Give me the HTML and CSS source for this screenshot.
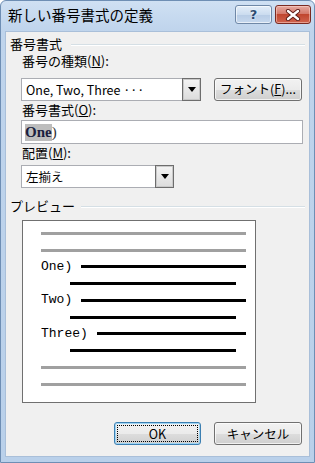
FILE: index.html
```html
<!DOCTYPE html>
<html lang="ja">
<head>
<meta charset="utf-8">
<link rel="stylesheet" href="styles.css">
</head>
<body>
<div class="window">
  <div class="titlebar">
    <span class="title">新しい番号書式の定義</span>
    <div class="caption-buttons">
      <div class="cbtn help">?</div>
      <div class="cbtn close">
        <svg width="16" height="12" viewBox="0 0 16 12"><path d="M3 2 L13 10 M13 2 L3 10" stroke="#5a1a14" stroke-width="4.2" stroke-linecap="round"/><path d="M3 2 L13 10 M13 2 L3 10" stroke="#ffffff" stroke-width="2.4" stroke-linecap="round"/></svg>
      </div>
    </div>
  </div>
  <div class="client">
    <div class="group-label"><span>番号書式</span><div class="sep"></div></div>
    <div class="field-label">番号の種類(<u>N</u>):</div>
    <div class="row">
      <div class="combo wide"><div class="combo-text">One, Two, Three ···</div><div class="drop"><svg width="8" height="5" viewBox="0 0 8 5"><path d="M0 0 H8 L4 5 Z" fill="#000"/></svg></div></div>
      <div class="btn font-btn">フォント(<u>F</u>)...</div>
    </div>
    <div class="field-label">番号書式(<u>O</u>):</div>
    <div class="textbox"><span class="sel">One</span><span class="paren">)</span></div>
    <div class="field-label">配置(<u>M</u>):</div>
    <div class="combo narrow"><div class="combo-text">左揃え</div><div class="drop"><svg width="8" height="5" viewBox="0 0 8 5"><path d="M0 0 H8 L4 5 Z" fill="#000"/></svg></div></div>
    <div class="group-label group2"><span>プレビュー</span><div class="sep"></div></div>
    <div class="preview">
      <div class="pv-row"><div class="line gray"></div></div>
      <div class="pv-row"><div class="line gray"></div></div>
      <div class="pv-row"><span class="pv-text">One)</span><div class="line black"></div></div>
      <div class="pv-row cont"><div class="line black"></div></div>
      <div class="pv-row"><span class="pv-text">Two)</span><div class="line black"></div></div>
      <div class="pv-row cont"><div class="line black"></div></div>
      <div class="pv-row"><span class="pv-text">Three)</span><div class="line black"></div></div>
      <div class="pv-row cont"><div class="line black"></div></div>
      <div class="pv-row"><div class="line gray"></div></div>
      <div class="pv-row"><div class="line gray"></div></div>
    </div>
    <div class="buttons">
      <div class="btn ok"><span class="focus">OK</span></div>
      <div class="btn cancel">キャンセル</div>
    </div>
  </div>
</div>
</body>
</html>
```

FILE: styles.css
```css
* { box-sizing: border-box; }
html, body { margin: 0; padding: 0; }
body {
  width: 315px;
  height: 463px;
  overflow: hidden;
  background: #ffffff;
  font-family: "Noto Sans CJK JP", "Noto Sans", sans-serif;
  font-size: 13px;
  color: #000;
}
.window {
  width: 315px;
  height: 463px;
  display: flex;
  flex-direction: column;
  border: 1px solid #6e8eb4;
  border-radius: 6px 6px 0 0;
  background: linear-gradient(to bottom, #cfe0f3 0px, #bfd4ec 30px, #b9d0ea 100%);
  padding: 0 4px 5px 4px;
}
.titlebar {
  height: 30px;
  display: flex;
  align-items: flex-start;
  justify-content: space-between;
  flex: none;
}
.title {
  font-size: 14.5px;
  line-height: 18px;
  margin-top: 5px;
  margin-left: 3px;
  color: #000;
}
.caption-buttons {
  display: flex;
  gap: 3px;
  margin-top: 4px;
  margin-right: -1px;
}
.cbtn {
  height: 19px;
  border-radius: 3px;
  display: flex;
  align-items: center;
  justify-content: center;
}
.help {
  width: 37px;
  border: 1px solid #6f88a7;
  background: linear-gradient(to bottom, #e4eef9 0%, #cbdcef 50%, #b7cce5 51%, #c6d8ee 100%);
  box-shadow: inset 0 0 0 1px rgba(255,255,255,0.6);
  font-family: "DejaVu Sans", sans-serif;
  font-weight: bold;
  font-size: 13px;
  color: #2d4c72;
  text-shadow: 0 0 2px #fff;
}
.close {
  width: 36px;
  border: 1px solid #7a2a22;
  background: linear-gradient(to bottom, #e6a9a0 0%, #d47a6c 45%, #c0462f 50%, #d0634e 100%);
  box-shadow: inset 0 0 0 1px rgba(255,220,210,0.5);
}
.client {
  flex: 1;
  background: #f0f0f0;
  border: 1px solid #a9bfd9;
  display: flex;
  flex-direction: column;
  align-items: flex-start;
}
.group-label {
  display: flex;
  align-items: center;
  width: 100%;
  height: 16px;
  margin-top: 4px;
  padding-left: 4px;
  line-height: 16px;
  font-size: 13px;
}
.group-label .sep {
  flex: 1;
  height: 2px;
  border-top: 1px solid #d5dfe5;
  border-bottom: 1px solid #ffffff;
  margin-left: 9px;
  margin-right: 4px;
  margin-top: 2px;
}
.group2 { margin-top: 10px; }
.group2 .sep { margin-left: 6px; }
.field-label {
  margin-left: 16px;
  height: 16px;
  line-height: 16px;
  font-size: 13px;
  margin-top: 1px;
}
.field-label u { text-underline-offset: 1px; }
.row {
  display: flex;
  align-items: center;
  margin-top: 8px;
  margin-left: 15px;
  height: 24px;
}
.combo {
  display: flex;
  height: 23px;
}
.combo.wide { width: 180px; }
.combo.narrow { width: 153px; margin-left: 15px; margin-top: 4px; }
.combo-text {
  flex: 1;
  background: #fff;
  border: 1px solid #abadb3;
  border-right: none;
  padding-left: 4px;
  line-height: 21px;
  font-size: 12.5px;
  white-space: nowrap;
  overflow: hidden;
}
.drop {
  width: 19px;
  border: 1px solid #6d6d6d;
  box-shadow: inset 0 0 0 1px #c9c9c9;
  background: linear-gradient(to bottom, #f4f4f4, #dcdcdc);
  display: flex;
  align-items: center;
  justify-content: center;
}
.btn {
  display: flex;
  align-items: center;
  justify-content: center;
  height: 23px;
  border: 1px solid #707070;
  border-radius: 3px;
  background: linear-gradient(to bottom, #f2f2f2 0%, #ebebeb 50%, #dddddd 51%, #cfcfcf 100%);
  box-shadow: inset 0 0 0 1px rgba(255,255,255,0.7);
  font-size: 12.5px;
  line-height: 16px;
}
.font-btn {
  width: 88px;
  margin-left: 13px;
}
.textbox {
  margin-left: 15px;
  margin-top: 2px;
  width: 282px;
  height: 24px;
  background: #fff;
  border: 1px solid #abadb3;
  padding-left: 3px;
  display: flex;
  align-items: center;
  font-family: "Liberation Serif", serif;
  font-size: 15px;
}
.textbox .sel {
  background: #bdbdbd;
  font-weight: bold;
  color: #1b1f3f;
  line-height: 17px;
}
.textbox .paren {
  color: #333;
}
.preview {
  margin-left: 16px;
  margin-top: 6px;
  width: 234px;
  height: 183px;
  background: #fff;
  border: 1px solid #707070;
  padding: 4px 9px 0 18px;
  display: flex;
  flex-direction: column;
}
.pv-row {
  height: 16.78px;
  display: flex;
  align-items: center;
  flex: none;
}
.pv-row.cont {
  padding-left: 29px;
  padding-right: 10px;
}
.pv-text {
  font-family: "Liberation Mono", "DejaVu Sans Mono", monospace;
  font-size: 13px;
  margin-right: 9px;
  color: #000;
  line-height: 16px;
}
.line {
  flex: 1;
  height: 3px;
}
.line.gray { background: #a0a0a0; }
.line.black { background: #000; }
.buttons {
  display: flex;
  width: 100%;
  justify-content: flex-end;
  gap: 13px;
  padding-right: 7px;
  margin-top: 19px;
}
.ok {
  width: 87px;
  border-color: #3c7fb1;
  box-shadow: inset 0 0 0 1px #9fd5f5;
  padding: 2px;
}
.ok .focus {
  width: 100%;
  height: 100%;
  border: 1px dotted #000;
  display: flex;
  align-items: center;
  justify-content: center;
}
.cancel { width: 88px; }
```
